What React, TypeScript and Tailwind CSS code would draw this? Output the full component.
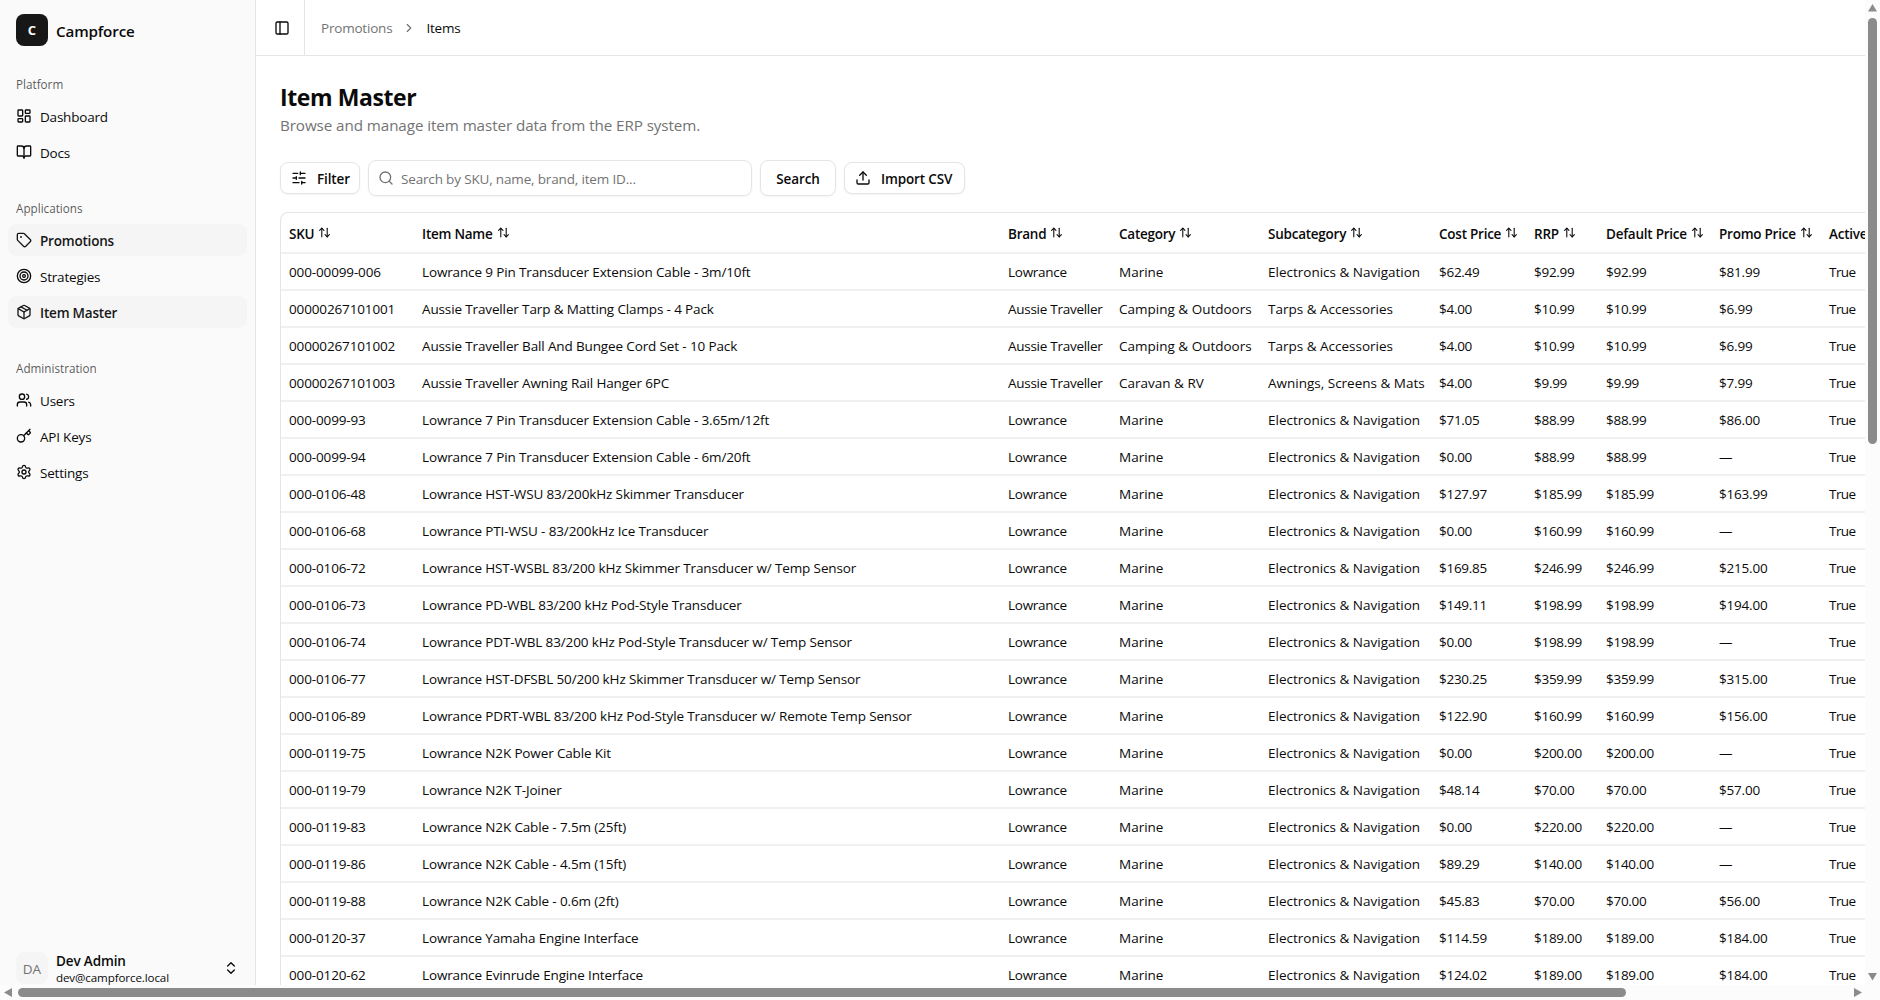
import clsx from "clsx";
import {
  ArrowUpDown,
  BookOpen,
  ChevronRight,
  ChevronsUpDown,
  Key,
  LayoutDashboard,
  Package,
  PanelLeft,
  Search,
  Settings,
  SlidersHorizontal,
  Tag,
  Target,
  Upload,
  Users,
} from "lucide-react";

const navGroups = [
  {
    label: "Platform",
    items: [
      { title: "Dashboard", icon: LayoutDashboard },
      { title: "Docs", icon: BookOpen },
    ],
  },
  {
    label: "Applications",
    items: [
      { title: "Promotions", icon: Tag, active: true },
      { title: "Strategies", icon: Target },
      { title: "Item Master", icon: Package, active: true },
    ],
  },
  {
    label: "Administration",
    items: [
      { title: "Users", icon: Users },
      { title: "API Keys", icon: Key },
      { title: "Settings", icon: Settings },
    ],
  },
];

const columns = [
  { title: "SKU", width: "w-[133px]", tracking: "tracking-[-0.01em]" },
  { title: "Item Name", width: "w-[586px]", tracking: "tracking-[-0.01em]" },
  { title: "Brand", width: "w-[111px]", tracking: "tracking-[-0.02em]" },
  { title: "Category", width: "w-[149px]", tracking: "" },
  { title: "Subcategory", width: "w-[171px]", tracking: "" },
  { title: "Cost Price", width: "w-[95px]", tracking: "tracking-[-0.02em]" },
  { title: "RRP", width: "w-[72px]", tracking: "tracking-[-0.02em]" },
  { title: "Default Price", width: "w-[113px]", tracking: "tracking-[-0.02em]" },
  { title: "Promo Price", width: "w-[110px]", tracking: "tracking-[-0.015em]" },
  { title: "Active", width: "w-[90px]", tracking: "tracking-[-0.04em]" },
];

const EN = "Electronics & Navigation";

const rows = [
  ["000-00099-006", "Lowrance 9 Pin Transducer Extension Cable - 3m/10ft", "Lowrance", "Marine", EN, "$62.49", "$92.99", "$92.99", "$81.99"],
  ["00000267101001", "Aussie Traveller Tarp & Matting Clamps - 4 Pack", "Aussie Traveller", "Camping & Outdoors", "Tarps & Accessories", "$4.00", "$10.99", "$10.99", "$6.99"],
  ["00000267101002", "Aussie Traveller Ball And Bungee Cord Set - 10 Pack", "Aussie Traveller", "Camping & Outdoors", "Tarps & Accessories", "$4.00", "$10.99", "$10.99", "$6.99"],
  ["00000267101003", "Aussie Traveller Awning Rail Hanger 6PC", "Aussie Traveller", "Caravan & RV", "Awnings, Screens & Mats", "$4.00", "$9.99", "$9.99", "$7.99"],
  ["000-0099-93", "Lowrance 7 Pin Transducer Extension Cable - 3.65m/12ft", "Lowrance", "Marine", EN, "$71.05", "$88.99", "$88.99", "$86.00"],
  ["000-0099-94", "Lowrance 7 Pin Transducer Extension Cable - 6m/20ft", "Lowrance", "Marine", EN, "$0.00", "$88.99", "$88.99", "—"],
  ["000-0106-48", "Lowrance HST-WSU 83/200kHz Skimmer Transducer", "Lowrance", "Marine", EN, "$127.97", "$185.99", "$185.99", "$163.99"],
  ["000-0106-68", "Lowrance PTI-WSU - 83/200kHz Ice Transducer", "Lowrance", "Marine", EN, "$0.00", "$160.99", "$160.99", "—"],
  ["000-0106-72", "Lowrance HST-WSBL 83/200 kHz Skimmer Transducer w/ Temp Sensor", "Lowrance", "Marine", EN, "$169.85", "$246.99", "$246.99", "$215.00"],
  ["000-0106-73", "Lowrance PD-WBL 83/200 kHz Pod-Style Transducer", "Lowrance", "Marine", EN, "$149.11", "$198.99", "$198.99", "$194.00"],
  ["000-0106-74", "Lowrance PDT-WBL 83/200 kHz Pod-Style Transducer w/ Temp Sensor", "Lowrance", "Marine", EN, "$0.00", "$198.99", "$198.99", "—"],
  ["000-0106-77", "Lowrance HST-DFSBL 50/200 kHz Skimmer Transducer w/ Temp Sensor", "Lowrance", "Marine", EN, "$230.25", "$359.99", "$359.99", "$315.00"],
  ["000-0106-89", "Lowrance PDRT-WBL 83/200 kHz Pod-Style Transducer w/ Remote Temp Sensor", "Lowrance", "Marine", EN, "$122.90", "$160.99", "$160.99", "$156.00"],
  ["000-0119-75", "Lowrance N2K Power Cable Kit", "Lowrance", "Marine", EN, "$0.00", "$200.00", "$200.00", "—"],
  ["000-0119-79", "Lowrance N2K T-Joiner", "Lowrance", "Marine", EN, "$48.14", "$70.00", "$70.00", "$57.00"],
  ["000-0119-83", "Lowrance N2K Cable - 7.5m (25ft)", "Lowrance", "Marine", EN, "$0.00", "$220.00", "$220.00", "—"],
  ["000-0119-86", "Lowrance N2K Cable - 4.5m (15ft)", "Lowrance", "Marine", EN, "$89.29", "$140.00", "$140.00", "—"],
  ["000-0119-88", "Lowrance N2K Cable - 0.6m (2ft)", "Lowrance", "Marine", EN, "$45.83", "$70.00", "$70.00", "$56.00"],
  ["000-0120-37", "Lowrance Yamaha Engine Interface", "Lowrance", "Marine", EN, "$114.59", "$189.00", "$189.00", "$184.00"],
  ["000-0120-62", "Lowrance Evinrude Engine Interface", "Lowrance", "Marine", EN, "$124.02", "$189.00", "$189.00", "$184.00"],
];

function AppSidebar() {
  return (
    <aside className="flex w-64 shrink-0 flex-col border-r border-[#e5e5e5] bg-[#fafafa]">
      <div className="flex h-15 shrink-0 items-center gap-2 px-4">
        <div className="flex size-8 items-center justify-center rounded-lg bg-[#171717] pt-0.5 text-[13px] font-bold text-[#fafafa]">
          C
        </div>
        <span className="pt-0.5 text-[15.2px] font-semibold tracking-[-0.01em]">Campforce</span>
      </div>
      <nav className="flex flex-1 flex-col gap-2">
        {navGroups.map((group) => (
          <div key={group.label} className="flex flex-col p-2">
            <div className="flex h-8 items-center px-2 pt-0.5 text-[11.7px] font-medium text-[#0a0a0a]/70">
              {group.label}
            </div>
            <ul className="flex flex-col gap-1">
              {group.items.map((item) => (
                <li
                  key={item.title}
                  className={clsx(
                    "flex h-8 items-center gap-2 rounded-lg px-2 text-[13.5px] tracking-[-0.015em]",
                    item.active && "bg-[#f5f5f5] font-semibold text-[#171717]"
                  )}
                >
                  <item.icon className="size-4" />
                  <span className="pt-0.5">{item.title}</span>
                </li>
              ))}
            </ul>
          </div>
        ))}
      </nav>
      <div className="flex h-[49px] shrink-0 items-start gap-2 overflow-hidden px-4 pt-4">
        <div className="flex size-8 items-center justify-center rounded-lg bg-[#f5f5f5] pt-0.5 text-[13.5px] text-[#737373]">
          DA
        </div>
        <div className="flex flex-1 flex-col pt-px">
          <span className="text-[13.5px] leading-[17px] font-semibold tracking-[-0.01em]">Dev Admin</span>
          <span className="text-[11.6px] leading-[15px] tracking-[-0.01em]">dev@campforce.local</span>
        </div>
        <ChevronsUpDown className="mt-2 size-4" />
      </div>
    </aside>
  );
}

function Toolbar() {
  const button =
    "flex items-center rounded-lg border border-[#e5e5e5] bg-white text-[13.5px] font-semibold tracking-[-0.01em] shadow-xs";
  return (
    <div className="flex items-center gap-2">
      <button className={clsx(button, "h-8 w-20 gap-2.5 pl-2.5")}>
        <SlidersHorizontal className="size-4" />
        <span className="pt-0.5">Filter</span>
      </button>
      <div className="flex h-9 w-96 items-center gap-2 rounded-lg border border-[#e5e5e5] pl-[9px] text-[#737373] shadow-xs">
        <Search className="size-4" />
        <span className="-ml-px pt-0.5 text-[13.5px] tracking-[-0.012em]">Search by SKU, name, brand, item ID...</span>
      </div>
      <button className={clsx(button, "h-9 w-19 justify-center")}>
        <span className="pt-0.5">Search</span>
      </button>
      <button className={clsx(button, "h-8 w-[121px] gap-2.5 pl-2.5")}>
        <Upload className="size-4" />
        <span className="pt-0.5">Import CSV</span>
      </button>
    </div>
  );
}

function ItemTable() {
  return (
    <div className="mt-4 w-[1700px] rounded-t-lg border border-b-0 border-[#e5e5e5] text-[13.5px]">
      <div className="flex h-[41px] items-center border-b-2 border-[#f0f0f0] font-semibold">
        {columns.map((col) => (
          <div key={col.title} className={clsx("flex shrink-0 items-center gap-1 px-2", col.width)}>
            <span className="pt-[3px] tracking-[-0.018em] whitespace-nowrap">{col.title}</span>
            <ArrowUpDown className="size-[13px] shrink-0" />
          </div>
        ))}
      </div>
      {rows.map((row) => (
        <div key={row[0]} className="flex h-[37px] items-center border-b-2 border-[#f0f0f0]">
          {[...row, "True"].map((cell, i) => (
            <div
              key={columns[i].title}
              className={clsx("shrink-0 px-2 pt-0.5 whitespace-nowrap", columns[i].width, columns[i].tracking)}
            >
              {cell}
            </div>
          ))}
        </div>
      ))}
    </div>
  );
}

function Scrollbars() {
  return (
    <>
      <div className="col-start-2 row-start-1 flex flex-col items-center bg-[#fcfcfc] py-1">
        <svg className="h-2 w-[9px]" viewBox="0 0 9 8" fill="#8b8b8b">
          <path d="M4.5 0 L9 7.5 H0 Z" />
        </svg>
        <div className="mt-1.5 h-[426px] w-[9px] rounded-full bg-[#8b8b8b]" />
        <svg className="mt-auto h-2 w-[9px]" viewBox="0 0 9 8" fill="#8b8b8b">
          <path d="M0 0 H9 L4.5 7.5 Z" />
        </svg>
      </div>
      <div className="col-span-2 flex items-center bg-[#fcfcfc] pl-1">
        <svg className="h-[9px] w-2" viewBox="0 0 8 9" fill="#8b8b8b">
          <path d="M8 0 V9 L0 4.5 Z" />
        </svg>
        <div className="ml-1.5 h-[9px] w-[1608px] rounded-full bg-[#8b8b8b]" />
        <svg className="mr-[18px] ml-auto h-[9px] w-2" viewBox="0 0 8 9" fill="#8b8b8b">
          <path d="M0 0 V9 L8 4.5 Z" />
        </svg>
      </div>
    </>
  );
}

export default function App() {
  return (
    <div className="grid h-screen w-full grid-cols-[1fr_15px] grid-rows-[985px_15px] overflow-hidden bg-white font-['Open_Sans',sans-serif] text-[#0a0a0a]">
      <div className="flex min-w-0 overflow-hidden">
        <AppSidebar />
        <main className="min-w-0 flex-1 overflow-hidden">
          <header className="flex h-14 items-center border-b border-[#e5e5e5]">
            <div className="flex h-full w-[49px] items-center border-r border-[#e5e5e5] pl-[18px]">
              <PanelLeft className="size-4" />
            </div>
            <div className="flex items-center gap-2.5 pl-4 text-[13.5px] tracking-[-0.015em]">
              <span className="pt-0.5 text-[#737373]">Promotions</span>
              <ChevronRight className="size-3.5 text-[#737373]" />
              <span className="pt-0.5">Items</span>
            </div>
          </header>
          <div className="p-6">
            <h1 className="pt-0.5 text-[23px] leading-[31px] font-bold tracking-[-0.018em]">Item Master</h1>
            <p className="pt-px text-[15.2px] leading-[22px] tracking-[-0.005em] text-[#737373]">
              Browse and manage item master data from the ERP system.
            </p>
            <div className="mt-6">
              <Toolbar />
            </div>
            <ItemTable />
          </div>
        </main>
      </div>
      <Scrollbars />
    </div>
  );
}
